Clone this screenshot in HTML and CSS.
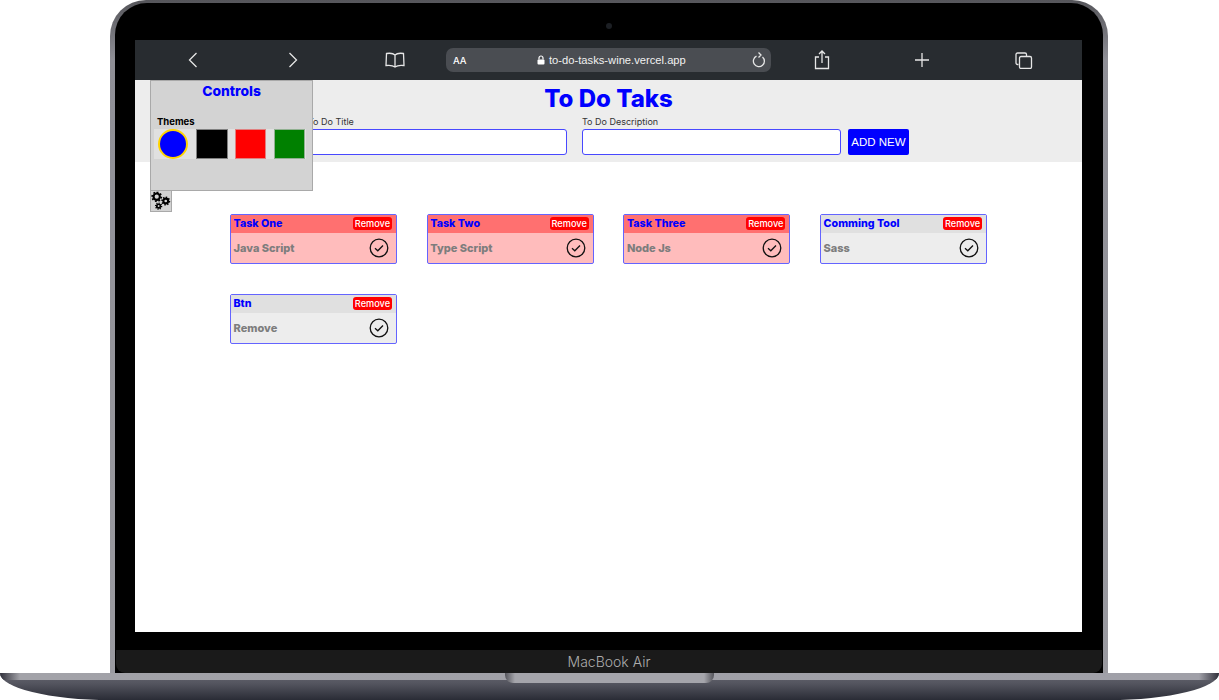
FILE: index.html
```html
<!DOCTYPE html>
<html lang="en">
<head>
<meta charset="utf-8">
<title>To Do Taks</title>
<link rel="stylesheet" href="styles.css">
</head>
<body>
<div class="laptop">
  <div class="lid">
    <div class="bezel">
      <div class="camera-row"><span class="camera"></span></div>
      <div class="screen">
        <div class="toolbar">
          <div class="tool tool-back"><svg width="10" height="16" viewBox="0 0 10 16"><path d="M8.500 1 1.500 8l7 7" class="ic"/></svg></div>
          <div class="tool tool-back"><svg width="10" height="16" viewBox="0 0 10 16"><path d="M1.500 1l7 7-7 7" class="ic"/></svg></div>
          <div class="tool tool-book"><svg width="20" height="16" viewBox="0 0 20 16"><path d="M10 3C8.500 1.500 5 1 1.500 1.500L1 13.500c3.500-.5 7 0 9 1.500 2-1.500 5.500-2 9-1.500L18.500 1.500C15 1 11.500 1.500 10 3Zm0 0v12" class="ic"/></svg></div>
          <div class="urlbar">
            <span class="aa">AA</span>
            <span class="url"><svg width="8" height="10" viewBox="0 0 8 10"><path d="M2 4.500V3a2 2 0 0 1 4 0v1.500" class="ic-lock"/><rect x="0.500" y="4.500" width="7" height="5" rx="1" fill="#fff"/></svg>to-do-tasks-wine.vercel.app</span>
            <svg class="reload" width="14" height="18" viewBox="0 0 14 18"><path d="M4.500 5.200A5.500 5.500 0 1 0 10.500 6M6.500 1.500 9 4 6.500 6.500" class="ic"/></svg>
          </div>
          <div class="tool tool-share"><svg width="16" height="20" viewBox="0 0 16 20"><path d="M5 7H1.500v11.500h13V7H11M8 13V1.500M5 4l3-3 3 3" class="ic"/></svg></div>
          <div class="tool tool-plus"><svg width="16" height="16" viewBox="0 0 16 16"><path d="M8 1v14M1 8h14" class="ic"/></svg></div>
          <div class="tool tool-tabs"><svg width="18" height="17" viewBox="0 0 18 17"><path d="M3.500 12.500H2.500a1.500 1.500 0 0 1-1.500-1.500V2.500A1.500 1.500 0 0 1 2.500 1H10a1.500 1.500 0 0 1 1.500 1.500V4" class="ic"/><rect x="4.500" y="4.500" width="12" height="12" rx="1.500" class="ic"/></svg></div>
        </div>

        <div class="page">
          <header class="page-head">
            <h1 class="page-title">To Do Taks</h1>
            <form class="add-form">
              <label class="field"><span class="field-label">To Do Title</span><input class="field-input" type="text"></label>
              <label class="field"><span class="field-label">To Do Description</span><input class="field-input" type="text"></label>
              <button class="add-btn" type="button">ADD NEW</button>
            </form>
          </header>

          <main class="task-grid">
            <article class="task done"><div class="task-head"><span class="task-title">Task One</span><span class="remove">Remove</span></div><div class="task-body"><span class="task-desc">Java Script</span><svg class="check" width="20" height="20" viewBox="0 0 20 20"><circle cx="10" cy="10" r="8.800"/><path d="M6 10.300l2.800 2.500L14 7.500"/></svg></div></article>
            <article class="task done"><div class="task-head"><span class="task-title">Task Two</span><span class="remove">Remove</span></div><div class="task-body"><span class="task-desc">Type Script</span><svg class="check" width="20" height="20" viewBox="0 0 20 20"><circle cx="10" cy="10" r="8.800"/><path d="M6 10.300l2.800 2.500L14 7.500"/></svg></div></article>
            <article class="task done"><div class="task-head"><span class="task-title">Task Three</span><span class="remove">Remove</span></div><div class="task-body"><span class="task-desc">Node Js</span><svg class="check" width="20" height="20" viewBox="0 0 20 20"><circle cx="10" cy="10" r="8.800"/><path d="M6 10.300l2.800 2.500L14 7.500"/></svg></div></article>
            <article class="task"><div class="task-head"><span class="task-title">Comming Tool</span><span class="remove">Remove</span></div><div class="task-body"><span class="task-desc">Sass</span><svg class="check" width="20" height="20" viewBox="0 0 20 20"><circle cx="10" cy="10" r="8.800"/><path d="M6 10.300l2.800 2.500L14 7.500"/></svg></div></article>
            <article class="task"><div class="task-head"><span class="task-title">Btn</span><span class="remove">Remove</span></div><div class="task-body"><span class="task-desc">Remove</span><svg class="check" width="20" height="20" viewBox="0 0 20 20"><circle cx="10" cy="10" r="8.800"/><path d="M6 10.300l2.800 2.500L14 7.500"/></svg></div></article>
          </main>

          <aside class="controls">
            <h2 class="controls-title">Controls</h2>
            <div class="themes-label">Themes</div>
            <div class="themes">
              <span class="swatch swatch-blue"></span>
              <span class="swatch swatch-black"></span>
              <span class="swatch swatch-red"></span>
              <span class="swatch swatch-green"></span>
            </div>
          </aside>
          <button class="gear-btn" type="button" aria-label="Settings">
            <svg width="21" height="20" viewBox="0 0 21 20">
              <circle class="gear-ring" cx="6" cy="5.500" r="3.300"/><circle class="gear-teeth" cx="6" cy="5.500" r="4.800" pathLength="16"/>
              <circle class="gear-ring" cx="15.500" cy="10" r="2.500"/><circle class="gear-teeth" cx="15.500" cy="10" r="3.800" pathLength="16"/>
              <circle class="gear-ring thin" cx="8" cy="15.300" r="1.900"/><circle class="gear-teeth thin" cx="8" cy="15.300" r="3.100" pathLength="16"/>
            </svg>
          </button>
        </div>
      </div>
      <div class="chin-gap"></div>
      <div class="chin">MacBook Air</div>
    </div>
  </div>
  <div class="base"><div class="base-band"></div><div class="notch"></div></div>
</div>
</body>
</html>
```

FILE: styles.css
```css
* { box-sizing: border-box; }
html, body { margin: 0; height: 100%; overflow: hidden; background: #fff; }
body { font-family: "Inter", "Liberation Sans", sans-serif; }

.laptop { width: 1219px; height: 700px; display: flex; flex-direction: column; }

.lid {
  width: 998px; height: 673px; margin-left: 110px; flex: none;
  padding: 3px 5px 0;
  background: linear-gradient(#55555a 0, #8f8f96 60px, #9a9aa0 100%);
  border-radius: 36px 36px 0 0;
}
.bezel { height: 670px; background: #000; border-radius: 32px 32px 0 0; display: flex; flex-direction: column; }
.camera-row { height: 37px; flex: none; display: flex; justify-content: center; align-items: center; padding-top: 9px; }
.camera { width: 6px; height: 6px; border-radius: 50%; background: #1c1f24; }

.screen { width: 947px; height: 592px; margin-left: 20px; flex: none; background: #fff; display: flex; flex-direction: column; }
.chin-gap { height: 18px; flex: none; }
.chin {
  height: 23px; margin: 0 1px; flex: none; background: #1a1a1a; color: #adadad;
  border-radius: 0 0 9px 9px;
  font-size: 14px; font-weight: 300; text-align: center; line-height: 23px;
}

.toolbar { height: 40px; flex: none; background: #282c30; display: flex; align-items: center; padding-left: 8px; }
.tool { height: 40px; display: flex; align-items: center; justify-content: center; }
.tool-back { width: 100px; }
.tool-book { width: 103px; }
.tool-share { width: 101px; }
.tool-plus { width: 100px; }
.tool-tabs { width: 104px; }
.ic { fill: none; stroke: #e6e6e6; stroke-width: 1.300; }
.ic-lock { fill: none; stroke: #fff; stroke-width: 1.200; }

.urlbar {
  width: 325px; height: 24px; background: #4a4d52; border-radius: 7px;
  display: flex; align-items: center; padding: 0 5px 0 7px; color: #fff;
}
.aa { font-size: 9.500px; font-weight: 500; width: 84px; flex: none; }
.url { font-family: "Liberation Sans", sans-serif; font-size: 11.200px; flex: 1; display: flex; align-items: center; gap: 4px; color: #f0f0f0; }

.page { flex: 1; position: relative; }
.page-head { height: 82px; background: #ededed; display: flex; flex-direction: column; align-items: center; }
.page-title { margin: 0; height: 36px; line-height: 37px; font-size: 24px; font-weight: 800; color: #0000ff; }
.add-form { display: flex; align-items: flex-end; gap: 15px; }
.field { display: flex; flex-direction: column; width: 259px; }
.field-label { font-size: 9px; line-height: 13px; height: 13px; margin: -1px 0 1px; color: #333; }
.field-input {
  width: 259px; height: 26px; padding: 0 4px; margin: 0;
  background: #fff; border: 1px solid #4848ff; border-radius: 3px; outline: none;
}
.add-btn {
  width: 61px; height: 26px; padding: 0; margin-left: -8px;
  background: #0000ff; color: #fff; border: 0; border-radius: 2px;
  font-family: "Liberation Sans", sans-serif; font-size: 11.500px;
}

.task-grid {
  display: grid; grid-template-columns: repeat(4, 167px); column-gap: 29.700px; row-gap: 30px;
  padding: 52px 0 0 95px;
}
.task { height: 50px; background: #ededed; border: 1px solid #6464ff; border-radius: 2px; display: flex; flex-direction: column; }
.task.done { background: #ffbcbc; }
.task-head { height: 18px; flex: none; background: #e0e0e0; display: flex; align-items: center; justify-content: space-between; padding: 0 4px 0 2.500px; }
.task.done .task-head { background: #ff7070; }
.task-title { font-size: 10.700px; font-weight: 800; color: #0000ff; margin-top: -1px; }
.remove {
  background: #ff0000; color: #fff; font-size: 9.200px; font-weight: 500;
  border-radius: 3px; width: 39px; height: 13px; line-height: 13px; text-align: center; margin-top: -2px;
}
.task-body { flex: 1; display: flex; align-items: center; justify-content: space-between; padding: 0 7px 0 2.500px; }
.task-desc { font-size: 11px; font-weight: 800; color: #7d7d7d; }
.check { fill: none; stroke: #111; stroke-width: 1.300; }

.controls {
  position: absolute; left: 15px; top: 0; width: 163px; height: 111px;
  background: #d3d3d3; border: 1px solid #a9a9a9;
}
.controls-title { margin: 0; padding-top: 2px; height: 34px; line-height: 17px; font-size: 13.800px; font-weight: 800; color: #0000ff; text-align: center; }
.themes-label { padding-left: 6px; font-size: 9.500px; font-weight: 700; line-height: 14px; color: #000; }
.themes { margin: 0 6px 0 3px; height: 30px; background: #e0e0e0; display: flex; align-items: center; justify-content: space-between; padding: 0 1px 0 4px; }
.swatch { height: 30px; display: block; flex: none; }
.swatch-blue { width: 30px; background: #0000ff; border: 2px solid #ffd400; border-radius: 50%; }
.swatch-black { width: 32px; background: #000; border: 1px solid #808080; }
.swatch-red { width: 31px; background: #ff0000; border: 1px solid #e08080; }
.swatch-green { width: 31px; background: #008000; border: 1px solid #90b090; }

.gear-btn {
  position: absolute; left: 15px; top: 110px; width: 22px; height: 22px; padding: 0;
  background: #d3d3d3; border: 1px solid #a9a9a9; display: flex; align-items: center; justify-content: center;
}
.gear-ring { fill: none; stroke: #000; stroke-width: 2.200; }
.gear-ring.thin { stroke-width: 1.800; }
.gear-teeth { fill: none; stroke: #000; stroke-width: 1.800; stroke-dasharray: 1 1; }
.gear-teeth.thin { stroke-width: 1.500; }

.base {
  position: relative; width: 1219px; height: 27px; flex: none; overflow: hidden;
  background: linear-gradient(#666670 0, #53545e 40%, #2a2c36 100%);
  border-radius: 0 0 110px 110px / 0 0 27px 27px;
}
.base-band { height: 7px; background: linear-gradient(90deg, #30303a 0, #a2a2a8 20px, #a0a0a8 1199px, #30303a 100%); }
.notch {
  position: absolute; left: 505px; top: 0; width: 209px; height: 10px;
  background: linear-gradient(90deg, #55555c 0, #a5a5ab 10px, #a5a5ab 199px, #55555c 100%);
  border-radius: 0 0 8px 8px;
}
```
